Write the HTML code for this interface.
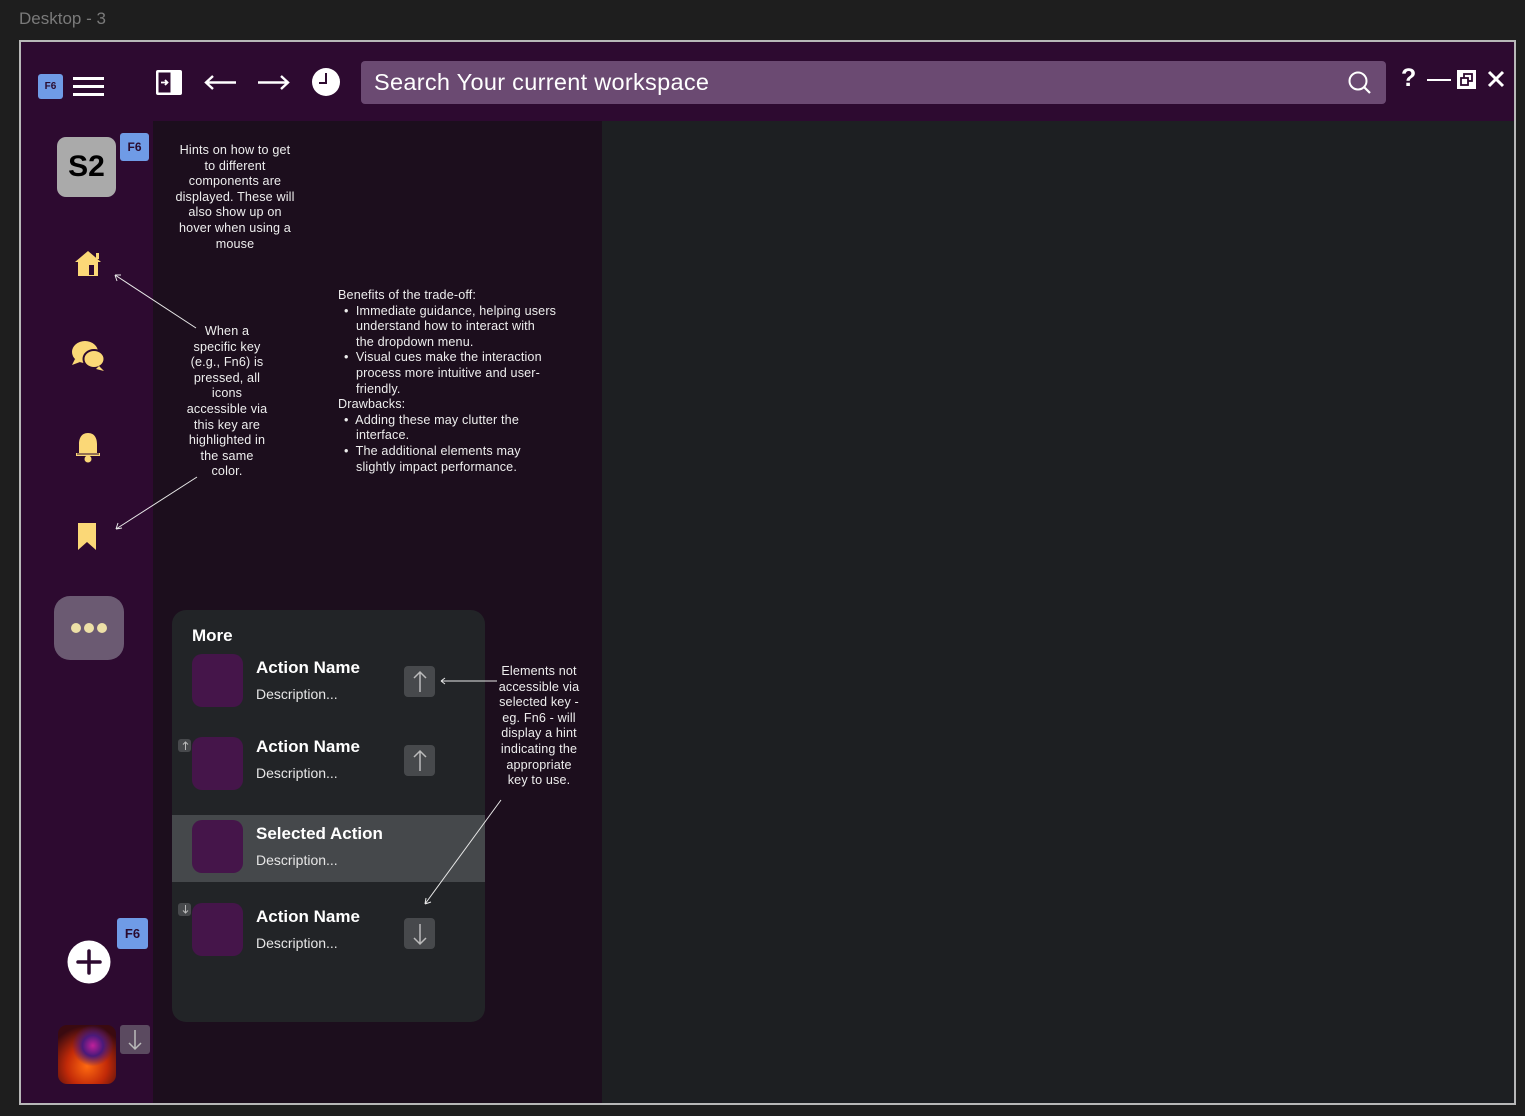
<!DOCTYPE html>
<html><head><meta charset="utf-8"><style>
*{margin:0;padding:0;box-sizing:border-box}
body{width:1525px;height:1116px;background:#1e1e1e;font-family:"Liberation Sans",sans-serif;position:relative;overflow:hidden;color:#fff}
.a{position:absolute}
.note{position:absolute;font-size:12.6px;letter-spacing:0.15px;line-height:15.6px;color:#eee;text-align:center}
.f6{position:absolute;background:#6f9be6;color:#2a0b2e;font-weight:bold;font-size:12px;border-radius:3px;display:flex;align-items:center;justify-content:center}
.sq{position:absolute;left:20px;width:51px;height:53px;border-radius:10px;background:#45154a}
.an{position:absolute;left:84px;font-weight:bold;font-size:17px}
.ds{position:absolute;left:84px;font-size:14px;color:#e6e6e6}
.kb{position:absolute;left:232px;width:31px;height:31px;background:#47494c;border-radius:4px}
</style></head><body>
<div class="a" style="left:19px;top:9px;font-size:17px;color:#7a7a7a">Desktop - 3</div>
<div class="a" style="left:19px;top:40px;width:1497px;height:1065px;border:2px solid #b8b8b8"></div>
<div class="a" style="left:21px;top:42px;width:1493px;height:1061px;background:#1d1f22"></div>
<div class="a" style="left:21px;top:42px;width:1493px;height:79px;background:#2d0a30"></div>
<div class="a" style="left:21px;top:121px;width:132px;height:982px;background:#2d0a30"></div>
<div class="a" style="left:153px;top:121px;width:449px;height:982px;background:#1c0e1d"></div>

<div class="f6" style="left:38px;top:74px;width:25px;height:25px;font-size:10px">F6</div>
<div class="a" style="left:73px;top:77px;width:31px;height:3px;background:#fff"></div>
<div class="a" style="left:73px;top:85px;width:31px;height:3px;background:#fff"></div>
<div class="a" style="left:73px;top:93px;width:31px;height:3px;background:#fff"></div>
<svg class="a" style="left:150px;top:65px" width="200" height="35" viewBox="0 0 200 35">
<rect x="6" y="5" width="26" height="25" rx="2" fill="#fff"/><rect x="8.5" y="7.5" width="12" height="20" fill="#2d0a30"/>
<path d="M11 17.5h6M15 15l2.5 2.5L15 20" stroke="#fff" stroke-width="1.8" fill="none"/>
<path d="M86 17.5H56M63 11l-7 6.5 7 6.5" stroke="#fff" stroke-width="2.4" fill="none"/>
<path d="M108 17.5h30M131 11l7 6.5-7 6.5" stroke="#fff" stroke-width="2.4" fill="none"/>
<circle cx="176" cy="17" r="14" fill="#fff"/><path d="M176 8v10h-7" stroke="#2d0a30" stroke-width="2" fill="none"/>
</svg>
<div class="a" style="left:361px;top:61px;width:1025px;height:43px;background:#6b4a72;border-radius:4px"></div>
<div class="a" style="left:374px;top:69px;font-size:23.5px;color:#fff;letter-spacing:0.3px">Search Your current workspace</div>
<svg class="a" style="left:1345px;top:68px" width="30" height="30"><circle cx="13" cy="13" r="8.5" stroke="#fff" stroke-width="2" fill="none"/><path d="M19 19l6 6" stroke="#fff" stroke-width="2.2"/></svg>
<div class="a" style="left:1401px;top:64px;font-size:25px;font-weight:bold">?</div>
<div class="a" style="left:1427px;top:79px;width:24px;height:2px;background:#fff"></div>
<svg class="a" style="left:1457px;top:70px" width="20" height="20"><rect x="0" y="0" width="19" height="19" fill="#fff"/><rect x="7" y="4" width="8" height="7" stroke="#2d0a30" stroke-width="1.8" fill="none"/><rect x="4" y="8" width="7" height="7" fill="#fff" stroke="#2d0a30" stroke-width="1.8"/></svg>
<svg class="a" style="left:1487px;top:70px" width="18" height="18"><path d="M2 2l14 14M16 2L2 16" stroke="#fff" stroke-width="3"/></svg>

<div class="a" style="left:57px;top:137px;width:59px;height:60px;background:#aaa;border-radius:9px;color:#000;font-weight:bold;font-size:30px;display:flex;align-items:center;justify-content:center">S2</div>
<div class="f6" style="left:120px;top:133px;width:29px;height:28px">F6</div>
<svg class="a" style="left:72px;top:248px" width="34" height="34" viewBox="0 0 34 34"><path d="M3 14L16 3l13 11h-3v14H6V14z" fill="#fbd877"/><rect x="24" y="5" width="3" height="6" fill="#fbd877"/><rect x="17" y="17" width="5" height="10" fill="#2d0a30"/></svg>
<svg class="a" style="left:70px;top:339px" width="38" height="36" viewBox="0 0 38 36"><ellipse cx="15" cy="13" rx="13" ry="11" fill="#fbd877"/><path d="M5 20l-3 6 8-3z" fill="#fbd877"/><ellipse cx="24" cy="20" rx="10.5" ry="9" fill="#fbd877" stroke="#2d0a30" stroke-width="2"/><path d="M29 27l5 5-8-2z" fill="#fbd877"/></svg>
<svg class="a" style="left:74px;top:431px" width="28" height="34" viewBox="0 0 28 34"><path d="M14 2c-7 0-9 6-9 11v9H2v3h24v-3h-3v-9c0-5-2-11-9-11z" fill="#fbd877"/><circle cx="14" cy="28" r="3.5" fill="#fbd877"/><rect x="3" y="22.5" width="22" height="1" fill="#2d0a30"/></svg>
<svg class="a" style="left:76px;top:522px" width="22" height="30"><path d="M2 1h18v27l-9-8-9 8z" fill="#fbd877"/></svg>
<div class="a" style="left:54px;top:596px;width:70px;height:64px;background:#6b5a72;border-radius:16px"></div>
<div class="a" style="left:71px;top:623px;width:10px;height:10px;border-radius:50%;background:#ede0a7"></div>
<div class="a" style="left:84px;top:623px;width:10px;height:10px;border-radius:50%;background:#ede0a7"></div>
<div class="a" style="left:97px;top:623px;width:10px;height:10px;border-radius:50%;background:#ede0a7"></div>
<div class="f6" style="left:117px;top:918px;width:31px;height:31px;font-size:13px">F6</div>
<svg class="a" style="left:67px;top:940px" width="45" height="45"><circle cx="22" cy="22" r="21.5" fill="#fff"/><path d="M22 11v22M11 22h22" stroke="#2d0a30" stroke-width="3.5" stroke-linecap="round"/></svg>
<div class="a" style="left:58px;top:1025px;width:58px;height:59px;border-radius:9px;background:radial-gradient(circle at 60% 35%,#c0209a 0,#4a1a7a 20%,transparent 40%),radial-gradient(circle at 50% 70%,#ff6a10 0,#c22a08 40%,#3a0a10 80%);"></div>
<div class="a" style="left:120px;top:1025px;width:30px;height:29px;background:#5b4a60;border-radius:3px"></div>
<svg class="a" style="left:120px;top:1025px" width="30" height="29"><path d="M15 5v19M9 18l6 6 6-6" stroke="#bbb" stroke-width="1.5" fill="none"/></svg>

<div class="note" style="left:160px;top:143px;width:150px">Hints on how to get<br>to different<br>components are<br>displayed. These will<br>also show up on<br>hover when using a<br>mouse</div>
<div class="note" style="left:172px;top:324px;width:110px">When a<br>specific key<br>(e.g., Fn6) is<br>pressed, all<br>icons<br>accessible via<br>this key are<br>highlighted in<br>the same<br>color.</div>
<div class="note" style="left:338px;top:288px;width:264px;text-align:left">Benefits of the trade-off:<br>
<span style="margin-left:6px">•</span>&nbsp; Immediate guidance, helping users<br><span style="margin-left:18px">understand how to interact with</span><br><span style="margin-left:18px">the dropdown menu.</span><br>
<span style="margin-left:6px">•</span>&nbsp; Visual cues make the interaction<br><span style="margin-left:18px">process more intuitive and user-</span><br><span style="margin-left:18px">friendly.</span><br>Drawbacks:<br>
<span style="margin-left:6px">•</span>&nbsp; Adding these may clutter the<br><span style="margin-left:18px">interface.</span><br>
<span style="margin-left:6px">•</span>&nbsp; The additional elements may<br><span style="margin-left:18px">slightly impact performance.</span></div>
<div class="note" style="left:484px;top:664px;width:110px">Elements not<br>accessible via<br>selected key -<br>eg. Fn6 - will<br>display a hint<br>indicating the<br>appropriate<br>key to use.</div>

<div class="a" style="left:172px;top:610px;width:313px;height:412px;background:#222427;border-radius:14px;overflow:hidden">
<div class="a" style="left:20px;top:16px;font-weight:bold;font-size:17px">More</div>
<div class="sq" style="top:44px"></div><div class="an" style="top:48px">Action Name</div><div class="ds" style="top:76px">Description...</div>
<div class="kb" style="top:56px"></div>
<div class="sq" style="top:127px"></div><div class="an" style="top:127px">Action Name</div><div class="ds" style="top:155px">Description...</div>
<div class="kb" style="top:135px"></div>
<div class="a" style="left:6px;top:129px;width:13px;height:13px;background:#47494c;border-radius:3px"></div>
<div class="a" style="left:0;top:205px;width:313px;height:67px;background:#45484b"></div>
<div class="sq" style="top:210px"></div><div class="an" style="top:214px">Selected Action</div><div class="ds" style="top:242px">Description...</div>
<div class="sq" style="top:293px"></div><div class="an" style="top:297px">Action Name</div><div class="ds" style="top:325px">Description...</div>
<div class="kb" style="top:308px"></div>
<div class="a" style="left:6px;top:293px;width:13px;height:13px;background:#47494c;border-radius:3px"></div>
</div>
<svg class="a" style="left:0;top:0" width="1525" height="1116">
<g stroke="#bbb" stroke-width="1.5" fill="none">
<path d="M420 672v20M414 678l6-6 6 6"/><path d="M420 751v20M414 757l6-6 6 6"/><path d="M420 924v20M414 938l6 6 6-6"/>
<path d="M185.5 742v8M183 744.5l2.5-2.5 2.5 2.5" stroke-width="1"/><path d="M185.5 905v8M183 910.5l2.5 2.5 2.5-2.5" stroke-width="1"/>
</g>
<g stroke="#e8e8e8" stroke-width="1" fill="none">
<path d="M196 328L115 275M115 275l6 0M115 275l2 6"/>
<path d="M197 477L116 529M116 529l6-1M116 529l2-6"/>
<path d="M497 681H441M441 681l4-3M441 681l4 3"/>
<path d="M501 800L425 904M425 904l1-6M425 904l6-2"/>
</g>
</svg>
</body></html>
